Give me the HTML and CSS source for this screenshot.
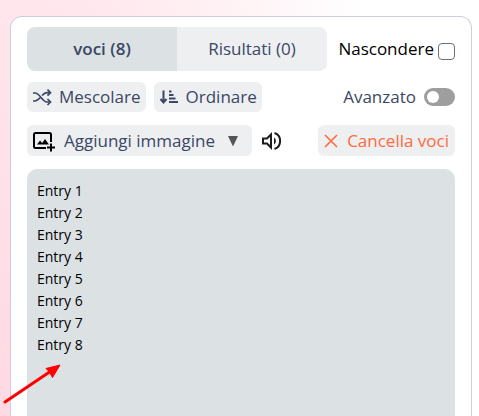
FILE: index.html
```html
<!DOCTYPE html>
<html lang="it">
<head>
  <meta charset="UTF-8" />
  <title>Voci</title>
  <meta name="viewport" content="width=device-width, initial-scale=1.0" />
  <link rel="stylesheet" href="styles.css">
</head>
<body>
  <main class="panel">
    <!-- TABS -->
    <div class="row tabs-row">
      <div class="tabs">
        <button class="tab active" type="button">voci (8)</button>
        <button class="tab" type="button">Risultati (0)</button>
      </div>
      <label class="hide-label" for="hide">Nascondere
        <input class="hide-box" type="checkbox" id="hide" />
      </label>
    </div>

    <!-- TOOLBAR -->
    <div class="row tools-row">
      <button class="btn" type="button">
        <svg class="icon" width="20" height="20" viewBox="0 0 20 20" fill="none" stroke="#3a4766" stroke-width="1.7">
          <path d="M1 6h2c5 0 7 9 12 9h3M1 14h2c2 0 3.500-1.500 5-3.200M10 8.500c1.500-1.600 3-2.800 5-2.800h3" />
          <path d="M15.500 2.500l3 3.200-3 3M15.500 12l3 3-3 3" />
        </svg>
        Mescolare
      </button>
      <button class="btn" type="button">
        <svg class="icon" width="20" height="20" viewBox="0 0 20 20" fill="none" stroke="#3a4766" stroke-width="2">
          <path d="M4.500 3.500v11.500M1.500 12l3 3.500 3-3.500" />
          <path d="M10 4.500h2.500M10 8h4.500M10 11.500h6.500M10 15h9" />
        </svg>
        Ordinare
      </button>
      <label class="advanced push" for="advanced">Avanzato
        <input class="switch" type="checkbox" role="switch" id="advanced" />
      </label>
    </div>

    <div class="row actions-row">
      <button class="btn" type="button">
        <svg class="icon" width="24" height="24" viewBox="0 0 24 24" fill="none" stroke="#000" stroke-width="2">
          <path d="M14 19H3.500a1.500 1.500 0 0 1-1.500-1.500v-12A1.500 1.500 0 0 1 3.500 4h14A1.500 1.500 0 0 1 19 5.500V13" />
          <path d="M19 14.500v8M15 18.500h8" />
          <path d="M5 15.500l3-4 2.200 2.500 2.800-4 4 5.500z" fill="#000" stroke="none" />
        </svg>
        Aggiungi immagine
        <svg class="caret" width="12" height="12" viewBox="0 0 12 12"><path d="M1 1h10L6 11.500z" fill="#555" /></svg>
      </button>
      <button class="sound" type="button" aria-label="Audio">
        <svg width="24" height="24" viewBox="0 0 24 24" fill="none" stroke="#1c1c1c" stroke-width="2">
          <path d="M3 9.500h4l4-4v13l-4-4H3z" />
          <path d="M14 8.500c2.500 1.500 2.500 5.500 0 7z" fill="#1c1c1c" stroke="none" />
          <path d="M14.500 4c7.500 2.500 7.500 13.500 0 16" />
        </svg>
      </button>
      <button class="btn clear push" type="button">
        <svg width="16" height="16" viewBox="0 0 16 16" fill="none" stroke="#ff6a3d" stroke-width="1.600"><path d="M2 2l12 12M14 2L2 14" /></svg>
        Cancella voci
      </button>
    </div>

    <!-- ENTRIES -->
    <textarea class="entries" aria-label="Voci" spellcheck="false">Entry 1
Entry 2
Entry 3
Entry 4
Entry 5
Entry 6
Entry 7
Entry 8</textarea>
  </main>

  <!-- Arrow pointing at the last entry -->
  <svg class="arrow" width="60" height="42" viewBox="0 0 60 42" aria-hidden="true">
    <path d="M2 39L48 8" stroke="#f00" stroke-width="3" stroke-linecap="round" />
    <path d="M57 2L43 5.500l3 3 3.500 6z" fill="#f00" stroke="#f00" />
  </svg>
</body>
</html>
```

FILE: styles.css
```css
* {
  box-sizing: border-box;
}
body {
  margin: 0;
  height: 100vh;
  padding: 16px 7px 0 10px;
  display: flex;
  overflow: hidden;
  font-family: "Open Sans", "Noto Sans", sans-serif;
  font-size: 17px;
  line-height: 24px;
  color: #3a4766;
  background: radial-gradient(84% 240% at 0 100%, #ffd9e3 0%, #ffe6ec 42%, #fff 100%);
}
button,
textarea {
  font: inherit;
  color: inherit;
  border: none;
  outline: none;
}
button,
label {
  cursor: pointer;
  white-space: nowrap;
}
svg {
  flex: none;
}
.panel {
  flex: 1;
  min-width: 0;
  display: flex;
  flex-direction: column;
  padding: 10px 16px 0;
  background: #fff;
  border: 1px solid #cbd0dc;
  border-bottom: none;
  border-radius: 12px 12px 0 0;
}
.row {
  display: flex;
  align-items: center;
  gap: 8px;
}
.push {
  margin-left: auto;
}

.tabs-row {
  margin-bottom: 11px;
}
.tabs {
  flex: 1;
  max-width: 300px;
  display: flex;
  border-radius: 8px;
  overflow: hidden;
}
.tab {
  flex: 1;
  height: 44px;
  padding: 0;
  background: #eeeff1;
}
.tab.active {
  background: #dce1e4;
  font-weight: 600;
}
.hide-label {
  display: flex;
  align-items: center;
  gap: 4px;
  margin-left: auto;
  color: #000;
}
.hide-box {
  appearance: none;
  width: 17px;
  height: 17px;
  margin: 4px 0 0;
  border: 1px solid #6b7080;
  border-radius: 4px;
  background: #fff;
}
.hide-box:checked {
  background: #3a4766;
}

.tools-row {
  margin-bottom: 13px;
}
.btn {
  display: flex;
  align-items: center;
  gap: 7px;
  height: 30px;
  padding: 0 5px;
  border-radius: 6px;
  background: #eeeff1;
}
.advanced {
  display: flex;
  align-items: center;
  gap: 8px;
}
.switch {
  appearance: none;
  display: flex;
  width: 31px;
  height: 18px;
  margin: 0;
  padding: 3px;
  border-radius: 9px;
  background: #9e9e9e;
}
.switch::before {
  content: "";
  width: 12px;
  height: 12px;
  border-radius: 50%;
  background: #fff;
}
.switch:checked {
  justify-content: flex-end;
  background: #3a4766;
}

.actions-row {
  margin-bottom: 13px;
}
.actions-row .btn {
  height: 31px;
  gap: 8px;
  padding-right: 6px;
}
.caret {
  margin: 0 7px 0 4px;
}
.sound {
  display: flex;
  padding: 0;
  background: none;
}
.clear {
  color: #ff6a3d;
}

.entries {
  flex: 1;
  width: 100%;
  min-height: 220px;
  padding: 11px 10px;
  resize: none;
  color: #000;
  background: #dce1e4;
  border-radius: 10px 10px 0 0;
  font-size: 14px;
  line-height: 22px;
}

.arrow {
  position: absolute;
  left: 3px;
  top: 363px;
  pointer-events: none;
}
```
